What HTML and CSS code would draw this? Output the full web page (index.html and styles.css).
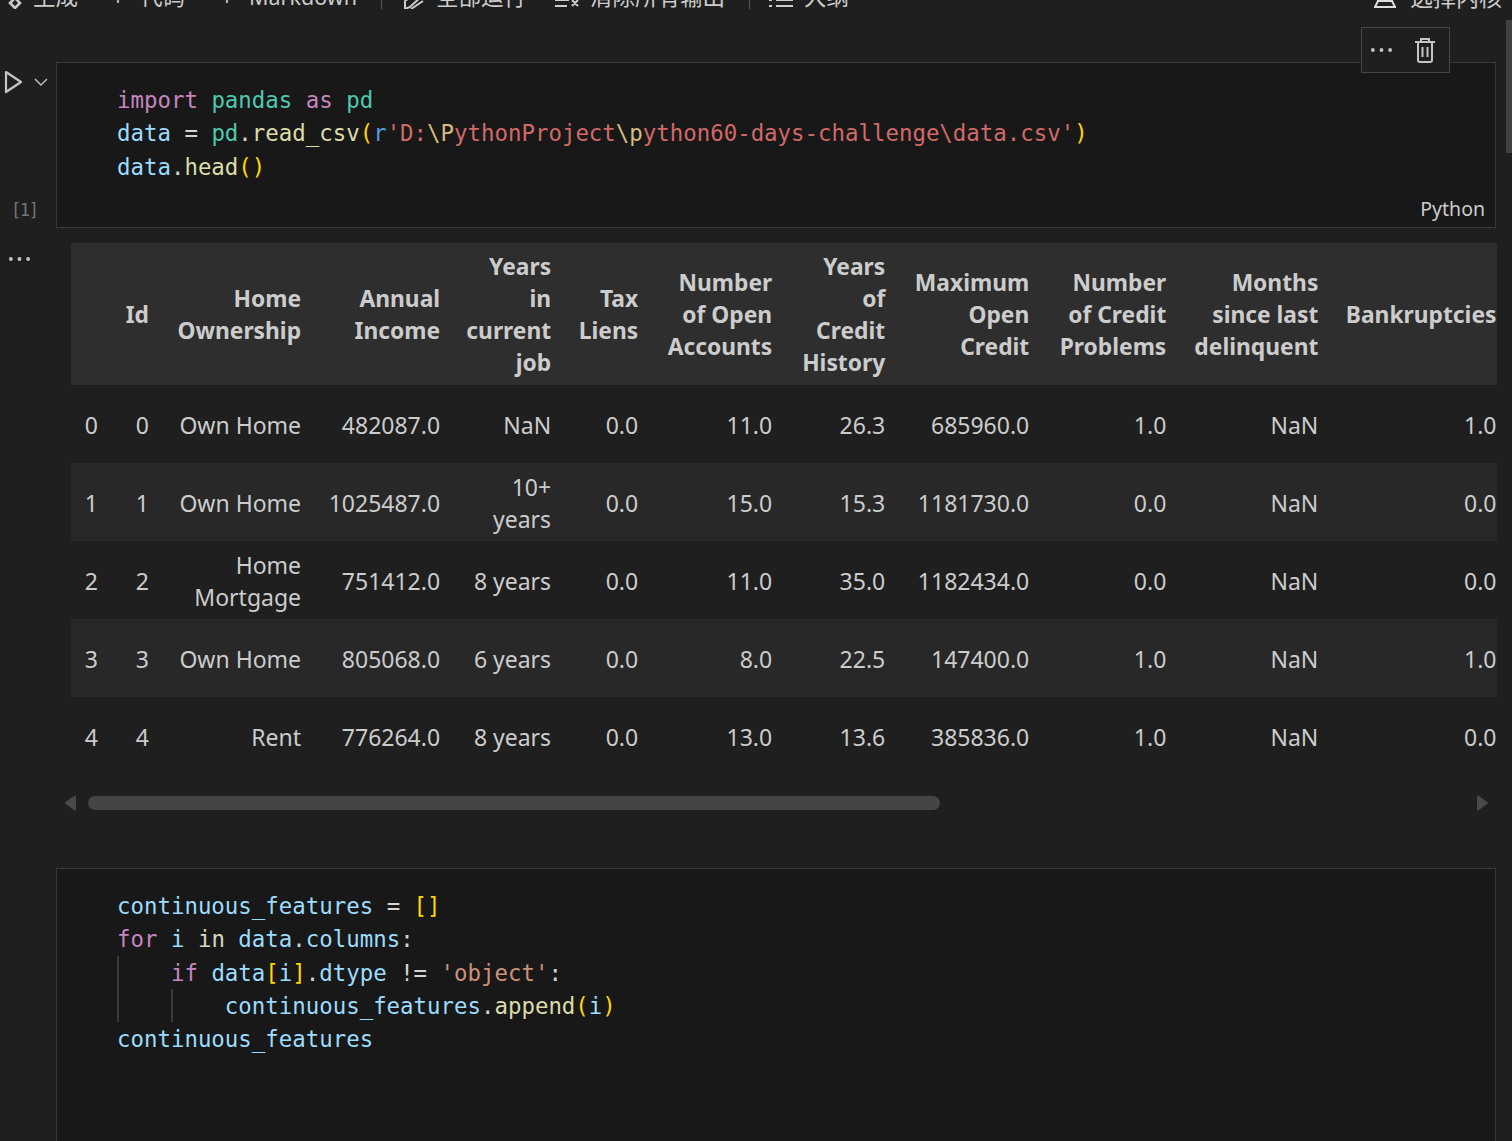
FILE: index.html
```html
<!DOCTYPE html>
<html lang="zh">
<head>
<meta charset="utf-8">
<title>Notebook</title>
<link rel="stylesheet" href="styles.css">
</head>
<body>
<div class="window">
  <div class="toolbar">
    <div class="tb-left">
      <span class="tb-item ti-gen"><svg class="tb-ic tb-ic-gen" viewBox="0 0 24 24"><path d="M15 13l5 5-5 5-5-5z" fill="none" stroke="#ccc" stroke-width="2.6"/><path d="M3 12l2 2" stroke="#ccc" stroke-width="2.600" fill="none"/></svg>生成</span>
      <span class="tb-item ti-code"><span class="plus">+</span>代码</span>
      <span class="tb-item ti-md"><span class="plus">+</span><span class="tb-latin">Markdown</span></span>
      <span class="tb-sep sep-a"></span>
      <span class="tb-item ti-run"><svg class="tb-ic" viewBox="0 0 24 24"><path d="M3 16L17 6l4 4-13 12-5 2zM14 2l-11 8M21 16L9 24" fill="none" stroke="#ccc" stroke-width="2"/></svg>全部运行</span>
      <span class="tb-item ti-clear"><svg class="tb-ic" viewBox="0 0 24 24"><path d="M0 9h16M0 15h14M0 21h12M17 15l6 6M23 15l-6 6" fill="none" stroke="#ccc" stroke-width="2"/></svg>清除所有输出</span>
      <span class="tb-sep sep-b"></span>
      <span class="tb-item ti-outline"><svg class="tb-ic" viewBox="0 0 24 24"><path d="M0 9h3M7 9h17M0 15h3M7 15h17M0 21h3M7 21h17" fill="none" stroke="#ccc" stroke-width="2"/></svg>大纲</span>
    </div>
    <span class="tb-item tb-kernel"><svg class="tb-ic" viewBox="0 0 24 24"><path d="M5 0v16h14V0M8 6h8M8 11h8M1 22h22M5 16l-3 6M19 16l3 6" fill="none" stroke="#ddd" stroke-width="2"/></svg>选择内核</span>
  </div>

  <section class="cell cell-first">
    <div class="gutter">
      <div class="run">
        <svg class="run-ic" viewBox="0 0 19 24"><path d="M2 2l15 10-15 10z" fill="none" stroke="#c5c5c5" stroke-width="2.200" stroke-linejoin="round"/></svg>
        <svg class="chev" viewBox="0 0 14 8"><path d="M1 1l6 6 6-6" fill="none" stroke="#c5c5c5" stroke-width="1.400"/></svg>
      </div>
      <div class="exec">[1]</div>
    </div>
    <div class="editor editor-first">
<pre class="code"><span class="kw">import</span> <span class="cls">pandas</span> <span class="kw">as</span> <span class="cls">pd</span>
<span class="var">data</span> <span class="op">=</span> <span class="cls">pd</span><span class="op">.</span><span class="fn">read_csv</span><span class="b1">(</span><span class="blue">r</span><span class="rx">'D:</span><span class="esc">\P</span><span class="rx">ythonProject</span><span class="esc">\p</span><span class="rx">ython60-days-challenge\data.csv'</span><span class="b1">)</span>
<span class="var">data</span><span class="op">.</span><span class="fn">head</span><span class="b1">()</span></pre>
      <span class="lang">Python</span>
    </div>
    <div class="cell-actions">
      <svg class="more" viewBox="0 0 24 6"><circle cx="3" cy="3" r="2" fill="#c5c5c5"/><circle cx="12" cy="3" r="2" fill="#c5c5c5"/><circle cx="21" cy="3" r="2" fill="#c5c5c5"/></svg>
      <svg class="trash" viewBox="0 0 22 26"><path d="M1 5h20M4 5v18q0 2 2 2h10q2 0 2-2V5M7 5V2h8v3M8.500 10v10M13.500 10v10" fill="none" stroke="#c5c5c5" stroke-width="2"/></svg>
    </div>
  </section>

  <section class="output">
    <div class="out-gutter">
      <svg class="more" viewBox="0 0 24 6"><circle cx="3" cy="3" r="2" fill="#c5c5c5"/><circle cx="12" cy="3" r="2" fill="#c5c5c5"/><circle cx="21" cy="3" r="2" fill="#c5c5c5"/></svg>
    </div>
    <div class="out-body">
      <div class="table-wrap">
        <table class="df">
          <colgroup>
            <col class="c0"><col class="c1"><col class="c2"><col class="c3"><col class="c4"><col class="c5"><col class="c6"><col class="c7"><col class="c8"><col class="c9"><col class="c10"><col class="c11">
          </colgroup>
          <thead>
            <tr><th></th><th>Id</th><th>Home Ownership</th><th>Annual Income</th><th>Years in current job</th><th>Tax Liens</th><th>Number of Open Accounts</th><th>Years of Credit History</th><th>Maximum Open Credit</th><th>Number of Credit Problems</th><th>Months since last delinquent</th><th>Bankruptcies</th></tr>
          </thead>
          <tbody>
            <tr><td>0</td><td>0</td><td>Own Home</td><td>482087.0</td><td>NaN</td><td>0.0</td><td>11.0</td><td>26.3</td><td>685960.0</td><td>1.0</td><td>NaN</td><td>1.0</td></tr>
            <tr><td>1</td><td>1</td><td>Own Home</td><td>1025487.0</td><td>10+ years</td><td>0.0</td><td>15.0</td><td>15.3</td><td>1181730.0</td><td>0.0</td><td>NaN</td><td>0.0</td></tr>
            <tr><td>2</td><td>2</td><td>Home Mortgage</td><td>751412.0</td><td>8 years</td><td>0.0</td><td>11.0</td><td>35.0</td><td>1182434.0</td><td>0.0</td><td>NaN</td><td>0.0</td></tr>
            <tr><td>3</td><td>3</td><td>Own Home</td><td>805068.0</td><td>6 years</td><td>0.0</td><td>8.0</td><td>22.5</td><td>147400.0</td><td>1.0</td><td>NaN</td><td>1.0</td></tr>
            <tr><td>4</td><td>4</td><td>Rent</td><td>776264.0</td><td>8 years</td><td>0.0</td><td>13.0</td><td>13.6</td><td>385836.0</td><td>1.0</td><td>NaN</td><td>0.0</td></tr>
          </tbody>
        </table>
      </div>
      <div class="hscroll">
        <svg class="arrow" viewBox="0 0 12 16"><path d="M11 1.500v13L2 8z" fill="#4a4a4a" stroke="#4a4a4a" stroke-width="2" stroke-linejoin="round"/></svg>
        <div class="track"><div class="thumb"></div></div>
        <svg class="arrow" viewBox="0 0 12 16"><path d="M1 1.500v13L10 8z" fill="#4a4a4a" stroke="#4a4a4a" stroke-width="2" stroke-linejoin="round"/></svg>
      </div>
    </div>
  </section>

  <section class="cell">
    <div class="gutter"></div>
    <div class="editor editor-second">
<pre class="code"><span class="var">continuous_features</span> <span class="op">=</span> <span class="b1">[]</span>
<span class="kw">for</span> <span class="var">i</span> <span class="kwin">in</span> <span class="var">data</span><span class="op">.</span><span class="var">columns</span><span class="op">:</span>
<span class="guide g1"></span>    <span class="kw">if</span> <span class="var">data</span><span class="b1">[</span><span class="var">i</span><span class="b1">]</span><span class="op">.</span><span class="var">dtype</span> <span class="op">!=</span> <span class="str">'object'</span><span class="op">:</span>
<span class="guide g1"></span><span class="guide g2"></span>        <span class="var">continuous_features</span><span class="op">.</span><span class="fn">append</span><span class="b1">(</span><span class="var">i</span><span class="b1">)</span>
<span class="var">continuous_features</span></pre>
    </div>
  </section>

  <div class="vscroll"></div>
</div>
</body>
</html>
```

FILE: styles.css
```css
* { box-sizing: border-box; }
html, body { margin: 0; padding: 0; height: 100%; background: #1f1f1f; overflow: hidden; }
.window {
  position: relative;
  width: 1512px;
  height: 1141px;
  overflow: hidden;
  background: #1f1f1f;
  color: #cccccc;
  font-family: "Noto Sans", "Noto Sans CJK SC", sans-serif;
  display: flex;
  flex-direction: column;
}

/* toolbar, scrolled mostly out of view */
.toolbar {
  height: 11px;
  flex: none;
  display: flex;
  justify-content: space-between;
  align-items: flex-end;
  padding: 0 10px 0 0;
  font-size: 22.5px;
  line-height: 28px;
  color: #cccccc;
}
.tb-left { display: flex; align-items: center; }
.tb-item { display: flex; align-items: center; white-space: nowrap; }
.tb-ic { width: 24px; height: 24px; flex: none; margin-right: 11px; }
.tb-ic-gen { margin-right: 9px; }
.tb-latin { font-size: 21.5px; }
.plus { width: 14px; text-align: center; }
.ti-code { margin-left: 33px; gap: 15px; }
.ti-md { margin-left: 35px; gap: 15px; }
.sep-a { margin-left: 24px; }
.ti-run { margin-left: 20px; gap: 0; }
.ti-run .tb-ic { margin-right: 10px; }
.ti-clear { margin-left: 29px; }
.sep-b { margin-left: 24px; }
.ti-outline { margin-left: 19px; }
.tb-sep { width: 1px; height: 24px; background: #555; }
.tb-kernel { font-size: 23px; }
.tb-kernel .tb-ic { margin-right: 13px; }

/* cells */
.cell { display: flex; flex: none; }
.cell-first { margin-top: 51px; position: relative; }
.gutter { width: 56px; flex: none; display: flex; flex-direction: column; justify-content: space-between; position: relative; }
.run { display: flex; align-items: center; gap: 11px; padding: 8px 0 0 4px; }
.run-ic { width: 19px; height: 24px; flex: none; }
.chev { width: 14px; height: 8px; flex: none; }
.exec { font-family: "DejaVu Sans Mono", monospace; font-size: 17px; letter-spacing: -1.4px; line-height: 20px; color: #757575; padding: 0 0 8px 11px; }

.editor {
  width: 1440px;
  flex: none;
  background: #181818;
  border: 1px solid #383838;
  position: relative;
}
.editor-first { height: 166px; padding: 21px 0 0 60px; }
.editor-second { height: 300px; padding: 21px 0 0 60px; }
.code {
  margin: 0;
  font-family: "DejaVu Sans Mono", "Liberation Mono", monospace;
  font-size: 22.4px;
  line-height: 33.3px;
  color: #d4d4d4;
  white-space: pre;
}
.kw { color: #c586c0; }
.kwin { color: #d8d8c0; }
.cls { color: #4ec9b0; }
.var { color: #9cdcfe; }
.op { color: #d4d4d4; }
.fn { color: #dcdcaa; }
.b1 { color: #ffd700; }
.blue { color: #569cd6; }
.str { color: #ce9178; }
.rx { color: #d16969; }
.esc { color: #d7ba7d; }
.lang { position: absolute; right: 10px; bottom: 2px; font-size: 19.500px; line-height: 32px; color: #cccccc; }
.guide { position: relative; display: inline-block; width: 0; height: 0; }
.guide::before { content: ""; position: absolute; top: -25px; width: 2px; height: 33.3px; background: #3a3a3a; }
.g1::before { left: 0; }
.g2::before { left: 53.7px; }

.cell-actions {
  position: absolute;
  left: 1361px;
  top: -35px;
  width: 89px;
  height: 46px;
  background: #1f1f1f;
  border: 1px solid #454545;
  display: flex;
  align-items: center;
  gap: 21px;
  padding-left: 8px;
}
.more { width: 23px; height: 6px; display: block; }
.trash { width: 22px; height: 26px; }

/* output */
.output { display: flex; flex: none; margin-top: 15px; }
.out-gutter { width: 71px; flex: none; padding: 13px 0 0 8px; }
.out-body { width: 1426px; flex: none; }
.table-wrap { width: 1426px; overflow: hidden; }
.df {
  width: 1440px;
  table-layout: fixed;
  border-collapse: collapse;
  font-size: 23px;
  line-height: 32px;
  color: #cccccc;
  text-align: right;
}
.c0 { width: 41.5px; } .c1 { width: 51px; } .c2 { width: 152px; } .c3 { width: 139px; }
.c4 { width: 111px; } .c5 { width: 87px; } .c6 { width: 134px; } .c7 { width: 113px; }
.c8 { width: 144px; } .c9 { width: 137px; } .c10 { width: 152px; } .c11 { width: 178px; }
.df th { background: #2e2e2e; height: 142px; padding: 1px 14.5px 0 11px; font-size: 22.8px; font-weight: 700; vertical-align: middle; }
.df td { height: 78px; padding: 1px 14.5px 0 11px; vertical-align: middle; }
.df tbody tr:nth-child(even) td { background: #282828; }

.hscroll { display: flex; align-items: center; height: 16px; margin-top: 20px; margin-left: -7px; }
.arrow { width: 12px; height: 16px; flex: none; }
.track { width: 1377px; margin: 0 12px; height: 16px; padding: 1px 0; }
.thumb { width: 852px; height: 14px; border-radius: 7px; background: #454545; }
.output + .cell { margin-top: 57px; }

.vscroll { position: absolute; right: 0; top: 20px; width: 6px; height: 133px; background: #424242; }
```
